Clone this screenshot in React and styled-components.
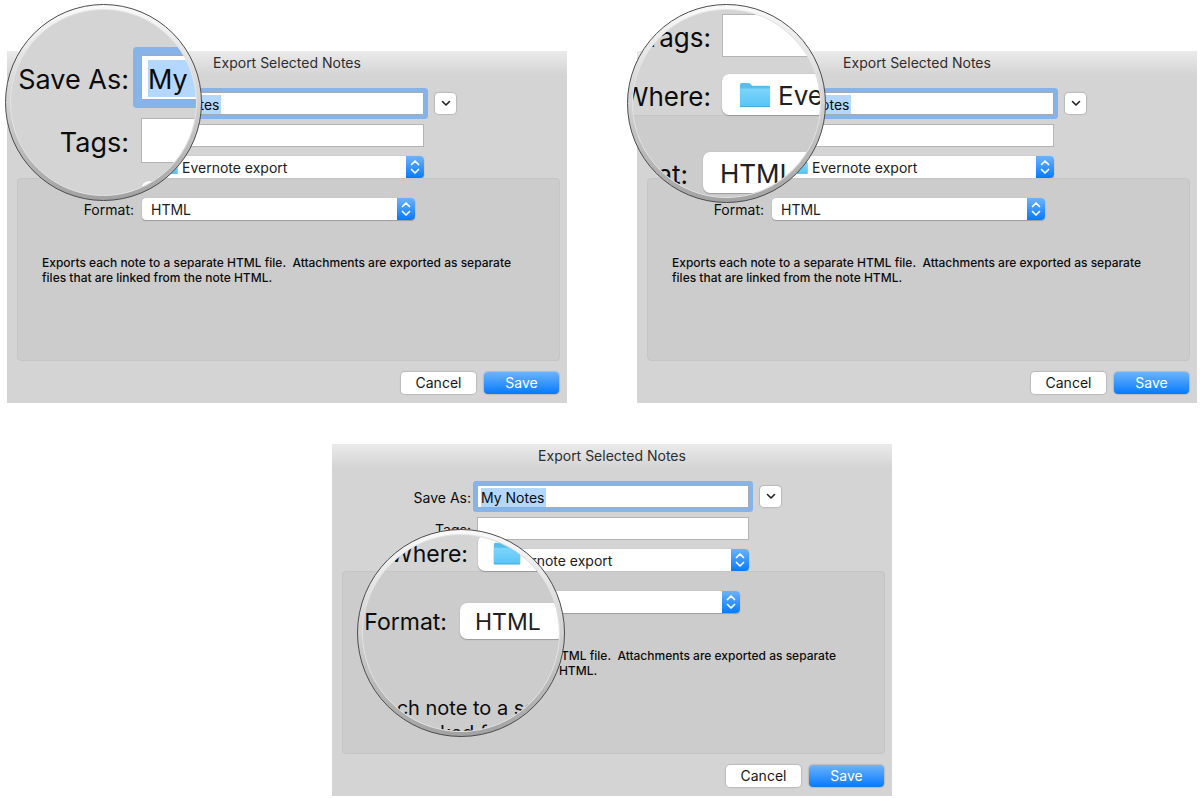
import React, { useId } from "react";
import styled, { createGlobalStyle, ThemeProvider } from "styled-components";

/* Every length in a dialog part is multiplied by the theme's zoom, so the
   same parts serve the dialogs and their magnified details. */
const z = (n) => ({ theme }) => `${Math.round(n * theme.zoom)}px`;

const GlobalStyle = createGlobalStyle`
  *, *::before, *::after { box-sizing: border-box; }
  body {
    margin: 0;
    background: #fff;
    color: #0c0c0c;
    font-family: Inter, "Liberation Sans", sans-serif;
  }
  button, input, select { font: inherit; color: inherit; margin: 0; }
`;

const Gallery = styled.main`
  display: grid;
  grid-template-columns: 1fr 1fr;
  gap: 41px 70px;
  padding: 51px 3px 2px 7px;
`;

const Figure = styled.div`
  position: relative;
  ${({ $centered }) =>
    $centered &&
    `grid-column: 1 / -1;
     justify-self: center;
     width: calc(50% - 35px);
     margin-left: 20px;`}
`;

const Sheet = styled.form`
  display: flex;
  flex-direction: column;
  background: linear-gradient(#ebebeb, #d4d4d4 24px);
`;

const Title = styled.h2`
  margin: 0 0 17px;
  font-size: 14px;
  line-height: 24px;
  font-weight: 400;
  text-align: center;
  color: #2e2e2e;
`;

const Rows = styled.div`
  display: flex;
  flex-direction: column;
  gap: ${z(9)};
`;

const Row = styled.div`
  display: grid;
  grid-template-columns: ${z(139)} 1fr ${z(137)};
  column-gap: ${z(6)};
  align-items: center;
`;

const PanelRow = styled(Row)`
  grid-template-columns: ${z(116)} 1fr ${z(136)};
  column-gap: ${z(8)};
`;

const Label = styled.label`
  padding-top: ${z(2)};
  font-size: ${z(14)};
  line-height: ${z(20)};
  text-align: right;
  white-space: nowrap;
`;

const TextBox = styled.input`
  min-width: 0;
  width: 100%;
  height: ${z(23)};
  padding: 0 ${z(4)};
  border: 1px solid #b4b4b4;
  border-radius: 0;
  outline: 0;
  font-size: ${z(14)};
  background: #fff;
`;

const FocusedBox = styled(TextBox)`
  padding: ${z(2)} ${z(3)} 0;
  border-color: #a3aab3;
  border-radius: 1px;
  box-shadow: 0 0 0 ${z(4)} #86b4e9;
  background: linear-gradient(#b3d7ff, #b3d7ff) ${z(3)} ${z(2)} / ${z(65)} ${z(19)} no-repeat #fff;
`;

const ExpandButton = styled.button`
  display: flex;
  align-items: center;
  justify-content: center;
  width: ${z(21)};
  height: ${z(21)};
  margin-left: ${z(5)};
  padding: 0;
  border: 0;
  border-radius: ${z(4)};
  background: #fff;
  box-shadow: 0 0 1px 1px rgba(0, 0, 0, 0.13);
`;

const Popup = styled.div`
  display: flex;
  align-items: center;
  height: ${z(22)};
  overflow: hidden;
  border-radius: ${z(4)};
  background: #fff;
  box-shadow: 0 1px 1px rgba(0, 0, 0, 0.22), 0 0 1px rgba(0, 0, 0, 0.2);
`;

const Choice = styled.select`
  flex: 1;
  min-width: 0;
  height: 100%;
  padding: ${z(1)} 0 0 ${({ $icon }) => z($icon ? 4 : 9)};
  border: 0;
  outline: 0;
  appearance: none;
  background: transparent;
  font-size: ${z(14)};
  color: #202020;
`;

const FolderSvg = styled.svg`
  flex: none;
  width: ${z(17)};
  height: ${z(14)};
  margin-left: ${z(9)};
`;

const Stepper = styled.span`
  display: flex;
  align-items: center;
  justify-content: center;
  flex: none;
  width: ${z(18)};
  height: 100%;
  background: linear-gradient(#6cb3fa, #067aff);
`;

const Panel = styled.section`
  margin: 0 ${z(7)} 0 ${z(10)};
  padding: ${z(19)} 0 ${z(75)};
  border: 1px solid #c5c5c5;
  border-radius: ${z(4)};
  background: #ccc;
`;

const Description = styled.p`
  margin: ${z(35)} ${z(24)} 0;
  font-size: ${z(12)};
  line-height: ${z(15)};
  font-weight: ${({ theme }) => (theme.zoom > 1 ? 400 : 500)};
  white-space: pre-line;
`;

const Actions = styled.div`
  display: flex;
  justify-content: flex-end;
  gap: 8px;
  padding: 11px 8px 9px;
`;

const PushButton = styled.button`
  width: 75px;
  height: 22px;
  padding: 0;
  border: 0;
  border-radius: 4px;
  font-size: 14px;
  line-height: 22px;
  color: ${({ $primary }) => ($primary ? "#fff" : "#161616")};
  background: ${({ $primary }) => ($primary ? "linear-gradient(#6cb3fa, #067aff)" : "#fff")};
  box-shadow: 0 0 1px 1px rgba(0, 0, 0, 0.12);
`;

/* The glass lies over its dialog and may reach past the dialog's edges. */
const Glass = styled.div`
  position: absolute;
  left: ${({ $x }) => $x}px;
  top: ${({ $y }) => $y}px;
  width: ${({ $size }) => $size}px;
  height: ${({ $size }) => $size}px;
  padding: 4px;
  border: 1px solid #4c4c4c;
  border-radius: 50%;
  background: linear-gradient(#fafafa, #d2d2d2 50%, #a2a2a2);
`;

const GlassView = styled.div`
  width: 100%;
  height: 100%;
  overflow: hidden;
  border: 1px solid #e4e4e4;
  border-radius: 50%;
  background: #d4d4d4;
`;

const Magnified = styled.div`
  width: ${z(560)};
  margin: ${({ $y }) => $y}px 0 0 ${({ $x }) => $x}px;
`;

function Folder() {
  return (
    <FolderSvg viewBox="0 0 34 28" preserveAspectRatio="none" aria-hidden="true">
      <defs>
        <linearGradient id="folder-front" x1="0" y1="0" x2="0" y2="1">
          <stop offset="0" stopColor="#7dd5fb" />
          <stop offset="1" stopColor="#58c4f6" />
        </linearGradient>
      </defs>
      <path d="M1 3Q1 1 3 1H10Q12 1 13 3L14 4H32Q33 4 33 6V26Q33 27 32 27H2Q1 27 1 26Z" fill="#58bdea" />
      <path d="M1 7H33V26Q33 27 32 27H2Q1 27 1 26Z" fill="url(#folder-front)" />
      <path d="M1 26.5H33" stroke="#43a9d8" strokeWidth="1" />
    </FolderSvg>
  );
}

function Arrows() {
  return (
    <Stepper aria-hidden="true">
      <svg width="10" height="16" viewBox="0 0 10 16" fill="none" stroke="#fff" strokeWidth="1.7" strokeLinecap="round" strokeLinejoin="round">
        <path d="M1.500 5.500L5 2L8.500 5.500M1.500 10.500L5 14L8.500 10.500" />
      </svg>
    </Stepper>
  );
}

function SaveAsRow({ expandable }) {
  const id = useId();
  return (
    <Row>
      <Label htmlFor={id}>Save As:</Label>
      <FocusedBox id={id} type="text" defaultValue="My Notes" />
      {expandable && (
        <ExpandButton type="button" aria-label="Expand">
          <svg width="10" height="7" viewBox="0 0 10 7" fill="none" stroke="#222" strokeWidth="1.6" strokeLinecap="round" strokeLinejoin="round">
            <path d="M1.500 1.500L5 5L8.500 1.500" />
          </svg>
        </ExpandButton>
      )}
    </Row>
  );
}

function TagsRow() {
  const id = useId();
  return (
    <Row>
      <Label htmlFor={id}>Tags:</Label>
      <TextBox id={id} type="text" />
    </Row>
  );
}

function WhereRow() {
  const id = useId();
  return (
    <Row>
      <Label htmlFor={id}>Where:</Label>
      <Popup>
        <Folder />
        <Choice id={id} $icon>
          <option>Evernote export</option>
        </Choice>
        <Arrows />
      </Popup>
    </Row>
  );
}

function FormatPanel() {
  const id = useId();
  return (
    <Panel>
      <PanelRow>
        <Label htmlFor={id}>Format:</Label>
        <Popup>
          <Choice id={id}>
            <option>HTML</option>
          </Choice>
          <Arrows />
        </Popup>
      </PanelRow>
      <Description>
        {"Exports each note to a separate HTML file.\u00a0 Attachments are exported as separate\nfiles that are linked from the note HTML."}
      </Description>
    </Panel>
  );
}

function ExportDialog() {
  return (
    <Sheet onSubmit={(e) => e.preventDefault()}>
      <Title>Export Selected Notes</Title>
      <Rows>
        <SaveAsRow expandable />
        <TagsRow />
        <WhereRow />
      </Rows>
      <FormatPanel />
      <Actions>
        <PushButton type="button">Cancel</PushButton>
        <PushButton type="submit" $primary>
          Save
        </PushButton>
      </Actions>
    </Sheet>
  );
}

function Magnifier({ x, y, size, zoom, shiftX, shiftY, children }) {
  return (
    <Glass $x={x} $y={y} $size={size}>
      <GlassView>
        <ThemeProvider theme={{ zoom }}>
          <Magnified $x={shiftX} $y={shiftY}>
            {children}
          </Magnified>
        </ThemeProvider>
      </GlassView>
    </Glass>
  );
}

export default function App() {
  return (
    <ThemeProvider theme={{ zoom: 1 }}>
      <GlobalStyle />
      <Gallery>
        <Figure>
          <ExportDialog />
          <Magnifier x={-2} y={-47} size={197} zoom={1.95} shiftX={-153} shiftY={45}>
            <Rows>
              <SaveAsRow />
              <TagsRow />
              <WhereRow />
            </Rows>
          </Magnifier>
        </Figure>
        <Figure>
          <ExportDialog />
          <Magnifier x={-10} y={-47} size={199} zoom={1.87} shiftX={-182} shiftY={4}>
            <Rows>
              <TagsRow />
              <WhereRow />
            </Rows>
            <FormatPanel />
          </Magnifier>
        </Figure>
        <Figure $centered>
          <ExportDialog />
          <Magnifier x={25} y={85} size={208} zoom={1.64} shiftX={-123} shiftY={0}>
            <Rows>
              <WhereRow />
            </Rows>
            <FormatPanel />
          </Magnifier>
        </Figure>
      </Gallery>
    </ThemeProvider>
  );
}
